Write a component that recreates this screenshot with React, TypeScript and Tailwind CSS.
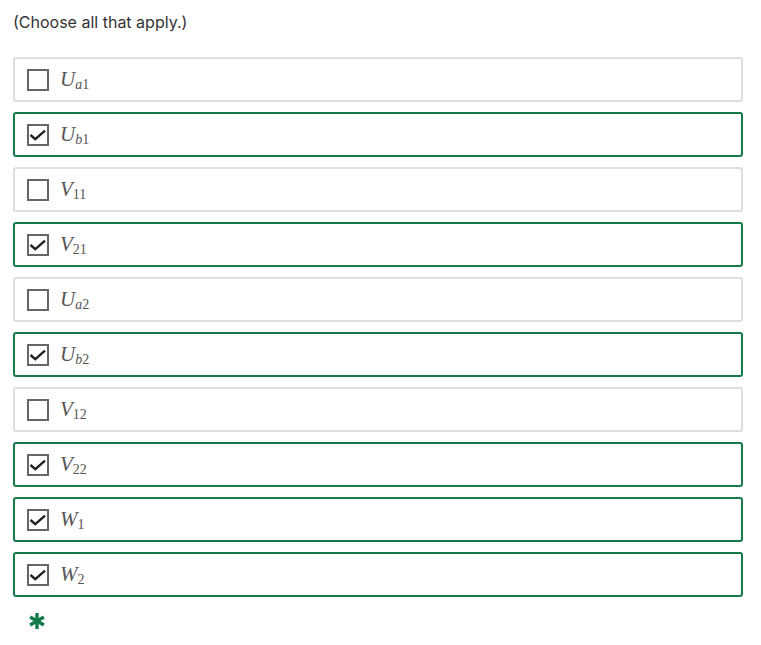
const options = [
  { base: "U", sub: "a", num: "1", checked: false },
  { base: "U", sub: "b", num: "1", checked: true },
  { base: "V", sub: "", num: "11", checked: false },
  { base: "V", sub: "", num: "21", checked: true },
  { base: "U", sub: "a", num: "2", checked: false },
  { base: "U", sub: "b", num: "2", checked: true },
  { base: "V", sub: "", num: "12", checked: false },
  { base: "V", sub: "", num: "22", checked: true },
  { base: "W", sub: "", num: "1", checked: true },
  { base: "W", sub: "", num: "2", checked: true },
];

function Box({ checked }: { checked: boolean }) {
  return (
    <span className="w-[22px] h-[22px] border-2 border-[#666666] bg-white flex items-center justify-center shrink-0">
      {checked && (
        <svg width="18" height="18" viewBox="0 0 18 18">
          <path d="M1.5 9 L6.3 13.2 L16 4.6" fill="none" stroke="#222" strokeWidth="2.4" />
        </svg>
      )}
    </span>
  );
}

export default function App() {
  return (
    <main className="w-[761px] h-[645px] bg-white px-[13px] pt-[12px] font-['Inter',sans-serif]">
      <p className="text-[16px] leading-[21px] text-[#333]">(Choose all that apply.)</p>

      <div className="mt-[24px] w-[730px] flex flex-col gap-[10px]">
        {options.map((o, i) => (
          <label
            key={i}
            className={`h-[45px] rounded-[3px] border-2 flex items-center pl-[12px] gap-[11px] ${
              o.checked ? "border-[#167a4b]" : "border-[#dedede]"
            }`}
          >
            <Box checked={o.checked} />
            <span className="font-['Liberation_Serif',serif] text-[#555] text-[21px] leading-none flex items-baseline">
              <span className="italic">{o.base}</span>
              <span className="text-[14px] relative top-[3px]">
                {o.sub && <span className="italic">{o.sub}</span>}
                {o.num}
              </span>
            </span>
          </label>
        ))}
      </div>

      <div className="mt-[15px] pl-[15px]">
        <svg width="18" height="18" viewBox="0 0 18 18">
          <g stroke="#157a4a" strokeWidth="3.4" strokeLinecap="butt">
            <line x1="9" y1="1" x2="9" y2="17" />
            <line x1="2.1" y1="5" x2="15.9" y2="13" />
            <line x1="2.1" y1="13" x2="15.9" y2="5" />
          </g>
        </svg>
      </div>
    </main>
  );
}
